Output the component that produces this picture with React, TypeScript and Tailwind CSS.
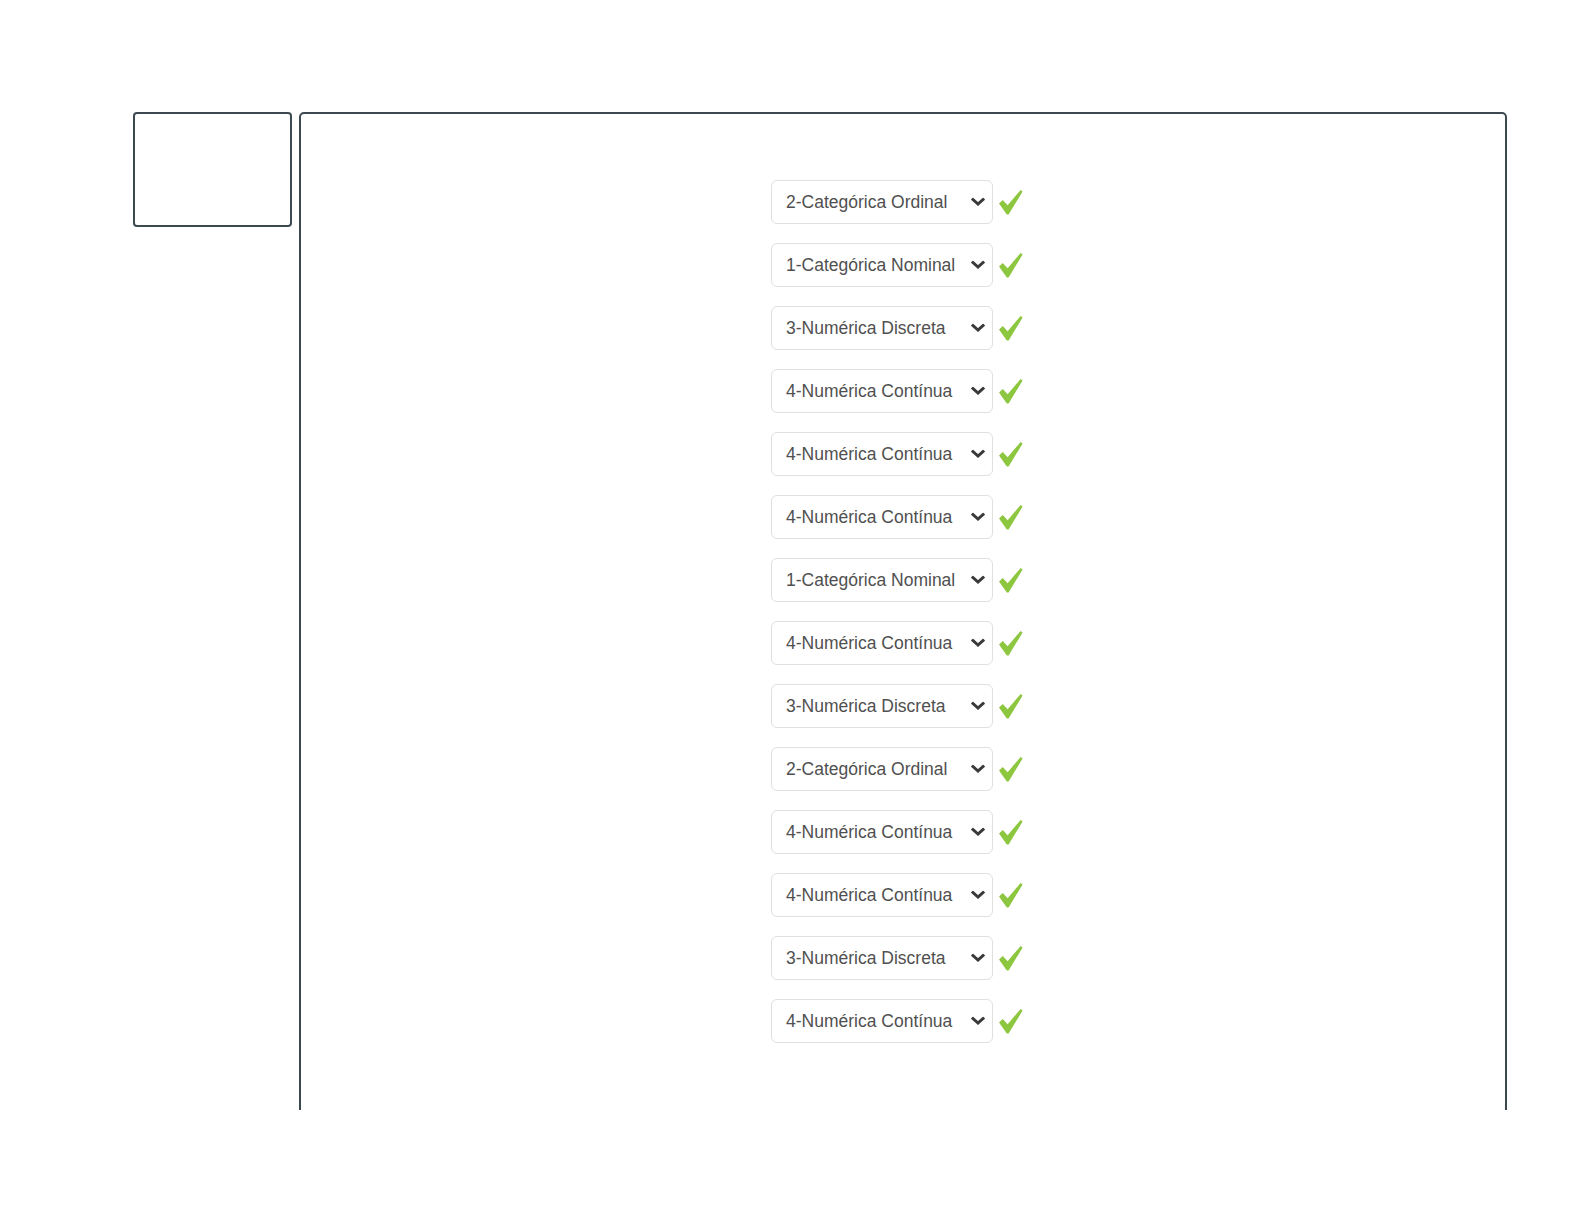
import { useState } from "react";

const OPTIONS = [
  "1-Categórica Nominal",
  "2-Categórica Ordinal",
  "3-Numérica Discreta",
  "4-Numérica Contínua",
];

const ANSWERS = [
  "2-Categórica Ordinal",
  "1-Categórica Nominal",
  "3-Numérica Discreta",
  "4-Numérica Contínua",
  "4-Numérica Contínua",
  "4-Numérica Contínua",
  "1-Categórica Nominal",
  "4-Numérica Contínua",
  "3-Numérica Discreta",
  "2-Categórica Ordinal",
  "4-Numérica Contínua",
  "4-Numérica Contínua",
  "3-Numérica Discreta",
  "4-Numérica Contínua",
];

function Chevron() {
  return (
    <svg
      width="14"
      height="9"
      viewBox="0 0 14 9"
      className="pointer-events-none absolute right-[8px] top-1/2 -translate-y-1/2"
    >
      <polyline
        points="2,2 7,6.5 12,2"
        fill="none"
        stroke="#3a3a3a"
        strokeWidth="3"
        strokeLinecap="square"
      />
    </svg>
  );
}

function Check() {
  return (
    <svg width="24" height="25" viewBox="0 0 24 25" className="shrink-0">
      <path
        d="M0 13.5 L3.8 10 L8.6 15.2 L21.6 0 L23.6 1.6 L9.6 24.5 L7.8 24.5 Z"
        fill="#8dc63f"
      />
    </svg>
  );
}

function AnswerRow({ initial }: { initial: string }) {
  const [value, setValue] = useState(initial);
  return (
    <div className="flex items-center gap-[6px]">
      <div className="relative w-[222px] h-[44px]">
        <select
          value={value}
          onChange={(e) => setValue(e.target.value)}
          className="appearance-none w-full h-full bg-white border border-[#e0e0e0] rounded-[6px] pl-[14px] pr-[30px] text-[17.5px] text-[#505050] outline-none"
          style={{ fontFamily: '"Liberation Sans", Arial, sans-serif' }}
        >
          {OPTIONS.map((o) => (
            <option key={o} value={o}>
              {o}
            </option>
          ))}
        </select>
        <Chevron />
      </div>
      <Check />
    </div>
  );
}

export default function App() {
  return (
    <div className="w-full h-[1222px] bg-white">
      <div className="flex gap-[7px] pt-[112px] pl-[133px]">
        <div className="w-[159px] h-[115px] border-2 border-[#3c4950] rounded-[4px]" />

        {/* main panel, cut off at the bottom */}
        <div className="w-[1208px] h-[998px] overflow-hidden">
          <div className="h-[1100px] border-2 border-[#3c4950] rounded-[5px] pt-[66px] pl-[470px]">
            <div className="flex flex-col gap-[19px]">
              {ANSWERS.map((a, i) => (
                <AnswerRow key={i} initial={a} />
              ))}
            </div>
          </div>
        </div>
      </div>
    </div>
  );
}
